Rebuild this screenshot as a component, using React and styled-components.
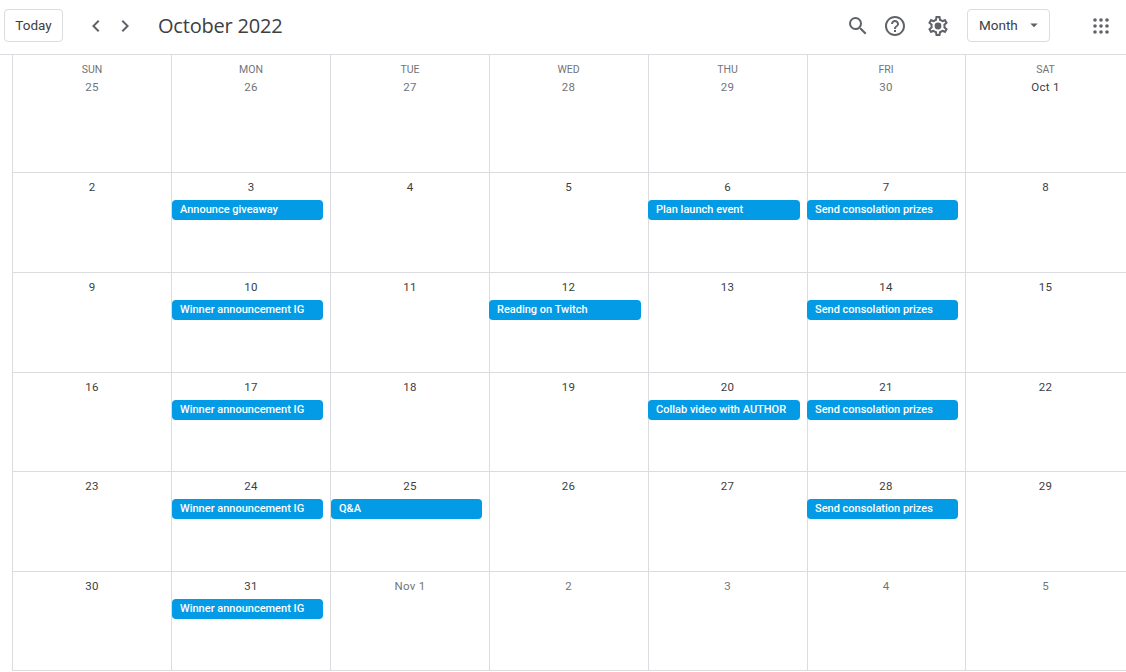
import React from "react";
import styled, { createGlobalStyle } from "styled-components";
import { MdSearch, MdHelpOutline, MdChevronLeft, MdChevronRight, MdArrowDropDown } from "react-icons/md";

const Global = createGlobalStyle`
  html, body { margin: 0; padding: 0; background: #fff; overflow: hidden; }
  body { font-family: Roboto, "Liberation Sans", sans-serif; color: #3c4043; }
`;
const Page = styled.div`
  width: 1126px; height: 672px; display: flex; flex-direction: column; background: #fff;
`;
const Toolbar = styled.header`
  height: 51px; flex: none; display: flex; align-items: center; border-bottom: 1px solid #dadce0;
  padding: 0 17px 3px 4px;
`;
const OutlineButton = styled.div`
  height: 33px; box-sizing: border-box; border: 1px solid #dadce0; border-radius: 4px; display: flex; align-items: center;
  font-size: 13.5px; color: #3c4043; background: #fff; padding-bottom: 2px;
`;
const TodayButton = styled(OutlineButton)`
  width: 59px; justify-content: center;
`;
const MonthButton = styled(OutlineButton)`
  width: 83px; padding-left: 11px; gap: 7px; margin-left: 17px;
`;
const IconButton = styled.span`
  display: flex; align-items: center; justify-content: center; color: #5f6368;
  margin-left: ${p => p.$ml || 0}px; width: ${p => p.$w || 24}px;
`;
const Title = styled.h1`
  margin: 0 0 1px 21px; font: 400 20px "Open Sans", sans-serif; color: #3c4043; letter-spacing: -0.2px; white-space: nowrap;
`;
const Spacer = styled.div`flex: 1;`;
const Grid = styled.main`
  flex: none; margin-left: 12px; width: 1114px; display: grid; box-sizing: border-box;
  grid-template-columns: 159px 159px 159px 159px 159px 158px 160px;
  grid-template-rows: 118px 100px 100px 99px 100px 99px;
  border-left: 1px solid #dadce0;
`;
const Cell = styled.div`
  min-width: 0; display: flex; flex-direction: column; align-items: center;
  border-right: ${p => p.$last ? "none" : "1px solid #dadce0"};
  border-bottom: 1px solid #dadce0;
  padding-top: ${p => p.$first ? 8 : 6}px;
  padding-right: ${p => p.$late ? 1 : 0}px;
`;
const Weekday = styled.div`
  font-size: 10.5px; line-height: 13px; color: #70757a; font-weight: 400; margin-bottom: 3px;
`;
const DateNum = styled.div`
  font-size: 11.5px; line-height: 16px; letter-spacing: .25px; color: ${p => p.$muted ? "#70757a" : "#3c4043"};
`;
const Event = styled.div`
  align-self: stretch; height: 20px; margin: 5px ${p => p.$late ? 6 : 7}px 0 ${p => p.$late ? -1 : 0}px;
  background: #039be5; border-radius: 4px;
  color: #fff; font-size: 11px; font-weight: 500; line-height: 19px; padding-left: 8px;
  white-space: nowrap; overflow: hidden;
`;
const Dots = () => (
  <svg width="16" height="16" viewBox="0 0 16 16" fill="#5f6368">
    {[2, 8, 14].flatMap(y => [2, 8, 14].map(x => <circle key={`${x}-${y}`} cx={x} cy={y} r="1.8" />))}
  </svg>
);
const Gear = () => (
  <svg width="24" height="24" viewBox="0 0 24 24" fill="#5f6368">
    <path d="M19.43 12.98c.04-.32.07-.64.07-.98 0-.34-.03-.66-.07-.98l2.11-1.65c.19-.15.24-.42.12-.64l-2-3.46c-.09-.16-.26-.25-.44-.25-.06 0-.12.01-.17.03l-2.49 1c-.52-.4-1.08-.73-1.69-.98l-.38-2.65C14.46 2.18 14.25 2 14 2h-4c-.25 0-.46.18-.49.42l-.38 2.65c-.61.25-1.17.59-1.69.98l-2.49-1c-.06-.02-.12-.03-.18-.03-.17 0-.34.09-.43.25l-2 3.46c-.13.22-.07.49.12.64l2.11 1.65c-.04.32-.07.65-.07.98 0 .33.03.66.07.98l-2.11 1.65c-.19.15-.24.42-.12.64l2 3.46c.09.16.26.25.44.25.06 0 .12-.01.17-.03l2.49-1c.52.4 1.08.73 1.69.98l.38 2.65c.03.24.24.42.49.42h4c.25 0 .46-.18.49-.42l.38-2.65c.61-.25 1.17-.59 1.69-.98l2.49 1c.06.02.12.03.18.03.17 0 .34-.09.43-.25l2-3.46c.12-.22.07-.49-.12-.64l-2.11-1.65zm-1.98-1.71c.04.31.05.52.05.73 0 .21-.02.43-.05.73l-.14 1.13.89.7 1.08.84-.7 1.21-1.27-.51-1.04-.42-.9.68c-.43.32-.84.56-1.25.73l-1.06.43-.16 1.13-.2 1.35h-1.4l-.19-1.35-.16-1.13-1.06-.43c-.43-.18-.83-.41-1.23-.71l-.91-.7-1.06.43-1.27.51-.7-1.21 1.08-.84.89-.7-.14-1.13c-.03-.31-.05-.54-.05-.74s.02-.43.05-.73l.14-1.13-.89-.7-1.08-.84.7-1.21 1.27.51 1.04.42.9-.68c.43-.32.84-.56 1.25-.73l1.06-.43.16-1.13.2-1.35h1.39l.19 1.35.16 1.13 1.06.43c.43.18.83.41 1.23.71l.91.7 1.06-.43 1.27-.51.7 1.21-1.07.85-.89.7.14 1.13z" />
    <circle cx="12" cy="12" r="3.4" />
  </svg>
);

const W = "Winner announcement IG", S = "Send consolation prizes";
const weeks = [
  [["25"], ["26"], ["27"], ["28"], ["29"], ["30"], ["Oct 1", null, true]],
  [["2"], ["3", "Announce giveaway"], ["4"], ["5"], ["6", "Plan launch event"], ["7", S], ["8"]],
  [["9"], ["10", W], ["11"], ["12", "Reading on Twitch"], ["13"], ["14", S], ["15"]],
  [["16"], ["17", W], ["18"], ["19"], ["20", "Collab video with AUTHOR"], ["21", S], ["22"]],
  [["23"], ["24", W], ["25", "Q&A"], ["26"], ["27"], ["28", S], ["29"]],
  [["30"], ["31", W], ["Nov 1"], ["2"], ["3"], ["4"], ["5"]],
];
const days = ["SUN", "MON", "TUE", "WED", "THU", "FRI", "SAT"];

export default function App() {
  return (
    <Page>
      <Global />
      <Toolbar>
        <TodayButton>Today</TodayButton>
        <IconButton $ml={21}><MdChevronLeft size={24} /></IconButton>
        <IconButton $ml={5}><MdChevronRight size={24} /></IconButton>
        <Title>October 2022</Title>
        <Spacer />
        <IconButton><MdSearch size={24} /></IconButton>
        <IconButton $ml={13}><MdHelpOutline size={24} /></IconButton>
        <IconButton $ml={19}><Gear /></IconButton>
        <MonthButton>Month<MdArrowDropDown size={18} color="#5f6368" /></MonthButton>
        <IconButton $ml={43} $w={16}><Dots /></IconButton>
      </Toolbar>
      <Grid>
        {weeks.map((week, r) => week.map(([date, ev, strong], c) => {
          const muted = r === 0 ? !strong : (r === 5 && c >= 2);
          const late = c >= 3;
          return (
            <Cell key={`${r}-${c}`} $first={r === 0} $last={c === 6} $late={late}>
              {r === 0 && <Weekday>{days[c]}</Weekday>}
              <DateNum $muted={muted}>{date}</DateNum>
              {ev && <Event $late={late}>{ev}</Event>}
            </Cell>
          );
        }))}
      </Grid>
    </Page>
  );
}
